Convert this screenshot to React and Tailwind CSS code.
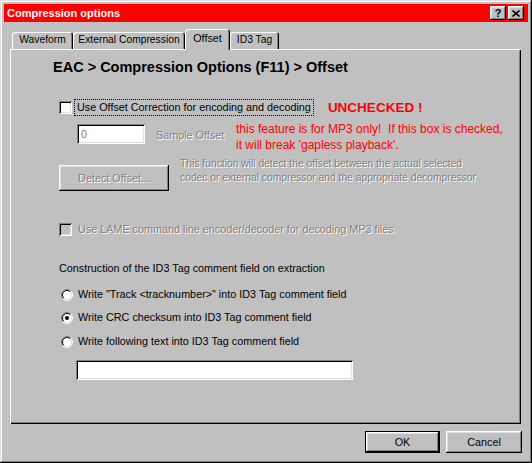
import React from 'react';

// classic 3d frames
const raised = "shadow-[inset_-1px_-1px_#000000,inset_1px_1px_#ffffff,inset_-2px_-2px_#808080,inset_2px_2px_#dfdfdf]";
const sunken = "shadow-[inset_1px_1px_#808080,inset_-1px_-1px_#ffffff,inset_2px_2px_#000000,inset_-2px_-2px_#dfdfdf]";
const disabledText = "text-[#808080] [text-shadow:1px_1px_0_#ffffff]";

function Check({ disabled }) {
  return (
    <div className={disabled ? `w-[13px] h-[13px] shrink-0 bg-[#c0c0c0] ${sunken}` : `w-[13px] h-[13px] shrink-0 bg-white ${sunken}`} />
  );
}

function Radio({ checked }) {
  return (
    <svg width="12" height="12" viewBox="0 0 12 12" className="shrink-0">
      <circle cx="6" cy="6" r="5" fill="#ffffff" />
      <path d="M2.1 9.9 A5.5 5.5 0 0 1 9.9 2.1" stroke="#808080" fill="none" />
      <path d="M9.9 2.1 A5.5 5.5 0 0 1 2.1 9.9" stroke="#ffffff" fill="none" />
      <path d="M2.8 9.2 A4.5 4.5 0 0 1 9.2 2.8" stroke="#000000" fill="none" />
      <path d="M9.2 2.8 A4.5 4.5 0 0 1 2.8 9.2" stroke="#dfdfdf" fill="none" />
      {checked && <circle cx="6" cy="6" r="2" fill="#000000" />}
    </svg>
  );
}

function Tab({ width, selected, children }) {
  if (selected) {
    return (
      <div className={`${width} h-[21px] -mb-[1px] relative z-10 bg-[#c0c0c0] rounded-t-[3px] flex items-start justify-center pt-[4px] text-[10.8px] shadow-[inset_1px_1px_#ffffff,inset_-1px_0_#000000,inset_-2px_0_#808080]`}>
        {children}
      </div>
    );
  }
  return (
    <div className={`${width} h-[17px] bg-[#c0c0c0] rounded-t-[3px] flex items-start justify-center pt-[3px] text-[10.3px] whitespace-nowrap shadow-[inset_1px_1px_#ffffff,inset_-1px_0_#000000,inset_-2px_0_#808080]`}>
      {children}
    </div>
  );
}

export default function App() {
  return (
    <div className="w-[532px] h-[463px] bg-[#c0c0c0] pt-[4px] px-[4px] font-['Liberation_Sans',Arial,sans-serif] text-[10.8px] leading-none text-black shadow-[inset_-1px_-1px_#000000,inset_1px_1px_#dfdfdf,inset_-2px_-2px_#808080,inset_2px_2px_#ffffff]">
      {/* Title bar */}
      <div className="h-[18px] bg-[#ff0000] flex items-center justify-between pl-[3px] pr-[4px]">
        <span className="text-white font-bold text-[11px]">Compression options</span>
        <div className="flex gap-[2px]">
          <div className={`w-[16px] h-[14px] bg-[#c0c0c0] flex items-center justify-center font-bold text-[11px] ${raised}`}>?</div>
          <div className={`w-[16px] h-[14px] bg-[#c0c0c0] flex items-center justify-center ${raised}`}>
            <svg width="8" height="7" viewBox="0 0 8 7">
              <path d="M0.5 0.5 L7.5 6.5 M7.5 0.5 L0.5 6.5" stroke="#000000" strokeWidth="1.6" />
            </svg>
          </div>
        </div>
      </div>

      {/* Tabs */}
      <div className="ml-[6px] mt-[7px] h-[20px] flex items-end pl-[2px]">
        <Tab width="w-[61px]">Waveform</Tab>
        <Tab width="w-[112px]">External Compression</Tab>
        <Tab width="w-[45px]" selected>Offset</Tab>
        <Tab width="w-[49px]">ID3 Tag</Tab>
      </div>

      {/* Panel */}
      <div className="ml-[6px] w-[511px] h-[375px] pt-[10px] pl-[43px] shadow-[inset_1px_1px_#ffffff,inset_-1px_-1px_#000000,inset_-2px_-2px_#808080]">
        <div className="h-[16px] text-[14.5px] font-bold leading-[16px]">EAC &gt; Compression Options (F11) &gt; Offset</div>

        <div className="ml-[6px]">
          <div className="mt-[24px] h-[17px] flex items-center">
            <Check />
            <div className="ml-[2px] h-[17px] px-[2px] border border-dotted border-black flex items-center">
              Use Offset Correction for encoding and decoding
            </div>
            <span className="ml-[14px] text-[13.5px] font-bold text-[#ff0000]">UNCHECKED !</span>
          </div>

          <div className="mt-[8px] h-[20px] flex items-start">
            <div className={`ml-[18px] w-[68px] h-[20px] bg-white pl-[4px] flex items-center text-[#808080] ${sunken}`}>0</div>
            <div className={`ml-[11px] w-[80px] mt-[4px] leading-[14px] ${disabledText}`}>Sample Offset</div>
            <div className="-mt-[3px] text-[12px] leading-[16px] text-[#ff0000] whitespace-pre">
              {"this feature is for MP3 only!  If this box is checked,\nit will break 'gapless playback'."}
            </div>
          </div>

          <div className="mt-[21px] h-[26px] flex items-start">
            <div className={`w-[110px] h-[26px] bg-[#c0c0c0] flex items-center justify-center ${raised} ${disabledText}`}>Detect Offset...</div>
            <div className={`ml-[11px] -mt-[8px] text-[10.3px] leading-[14px] ${disabledText}`}>
              This function will detect the offset between the actual selected<br />
              codec or external compressor and the appropriate decompressor
            </div>
          </div>

          <div className="mt-[31px] h-[15px] flex items-center">
            <Check disabled />
            <span className={`ml-[6px] ${disabledText}`}>Use LAME command line encoder/decoder for decoding MP3 files</span>
          </div>

          <div className="mt-[24px] h-[14px] leading-[14px]">Construction of the ID3 Tag comment field on extraction</div>

          <div className="mt-[12px] h-[15px] flex items-center pl-[2px]">
            <Radio />
            <span className="ml-[5px]">Write "Track &lt;tracknumber&gt;" into ID3 Tag comment field</span>
          </div>
          <div className="mt-[8px] h-[15px] flex items-center pl-[2px]">
            <Radio checked />
            <span className="ml-[5px]">Write CRC checksum into ID3 Tag comment field</span>
          </div>
          <div className="mt-[9px] h-[15px] flex items-center pl-[2px]">
            <Radio />
            <span className="ml-[5px]">Write following text into ID3 Tag comment field</span>
          </div>

          <div className={`mt-[11px] ml-[17px] w-[277px] h-[20px] bg-white ${sunken}`} />
        </div>
      </div>

      {/* Buttons */}
      <div className="mt-[7px] flex justify-end gap-[6px] pr-[6px]">
        <div className="w-[75px] h-[22px] border border-black">
          <div className={`w-full h-full bg-[#c0c0c0] flex items-center justify-center ${raised}`}>OK</div>
        </div>
        <div className={`w-[76px] h-[22px] bg-[#c0c0c0] flex items-center justify-center ${raised}`}>Cancel</div>
      </div>
    </div>
  );
}
